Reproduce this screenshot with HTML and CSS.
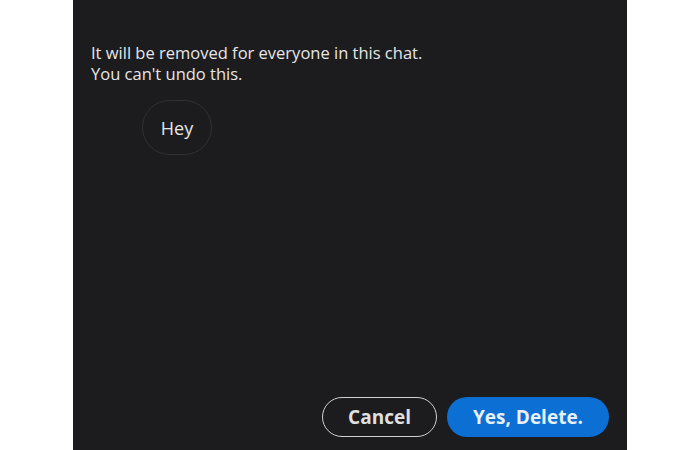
FILE: index.html
```html
<!DOCTYPE html>
<html lang="en">
<head>
    <meta charset="UTF-8">
    <title>Delete message</title>
    <link rel="stylesheet" href="styles.css">
</head>
<body>
    <div class="dialog">
        <p class="warning">It will be removed for everyone in this chat.<br>You can't undo this.</p>
        <div class="preview">
            <div class="bubble">Hey</div>
        </div>
        <div class="actions">
            <button class="btn btn-cancel">Cancel</button>
            <button class="btn btn-delete">Yes, Delete.</button>
        </div>
    </div>
</body>
</html>
```

FILE: styles.css
```css
body {
    margin: 0;
    background: #ffffff;
    font-family: 'Open Sans', sans-serif;
}
.dialog {
    margin-left: 73px;
    width: 554px;
    height: 450px;
    box-sizing: border-box;
    padding: 42px 18px 13px 18px;
    background: #1c1c1e;
    display: flex;
    flex-direction: column;
}
.warning {
    margin: 0;
    color: #e6e6e6;
    font-size: 16.5px;
    line-height: 21px;
}
.preview {
    margin-top: 16px;
    padding-left: 51px;
}
.bubble {
    display: inline-flex;
    align-items: center;
    justify-content: center;
    width: 70px;
    height: 55px;
    box-sizing: border-box;
    border: 1px solid #303032;
    border-radius: 28px;
    color: #e6e6e6;
    font-size: 18px;
}
.actions {
    margin-top: auto;
    display: flex;
    justify-content: flex-end;
    gap: 10px;
}
.btn {
    height: 40px;
    border-radius: 20px;
    font-family: 'Open Sans', sans-serif;
    font-size: 19px;
    font-weight: 700;
    cursor: pointer;
}
.btn-cancel {
    width: 115px;
    background: #1c1c1e;
    border: 1.5px solid #d0d0d0;
    color: #e0e0e0;
}
.btn-delete {
    width: 162px;
    background: #0b6fd3;
    border: none;
    color: #e8f0fb;
}
```
